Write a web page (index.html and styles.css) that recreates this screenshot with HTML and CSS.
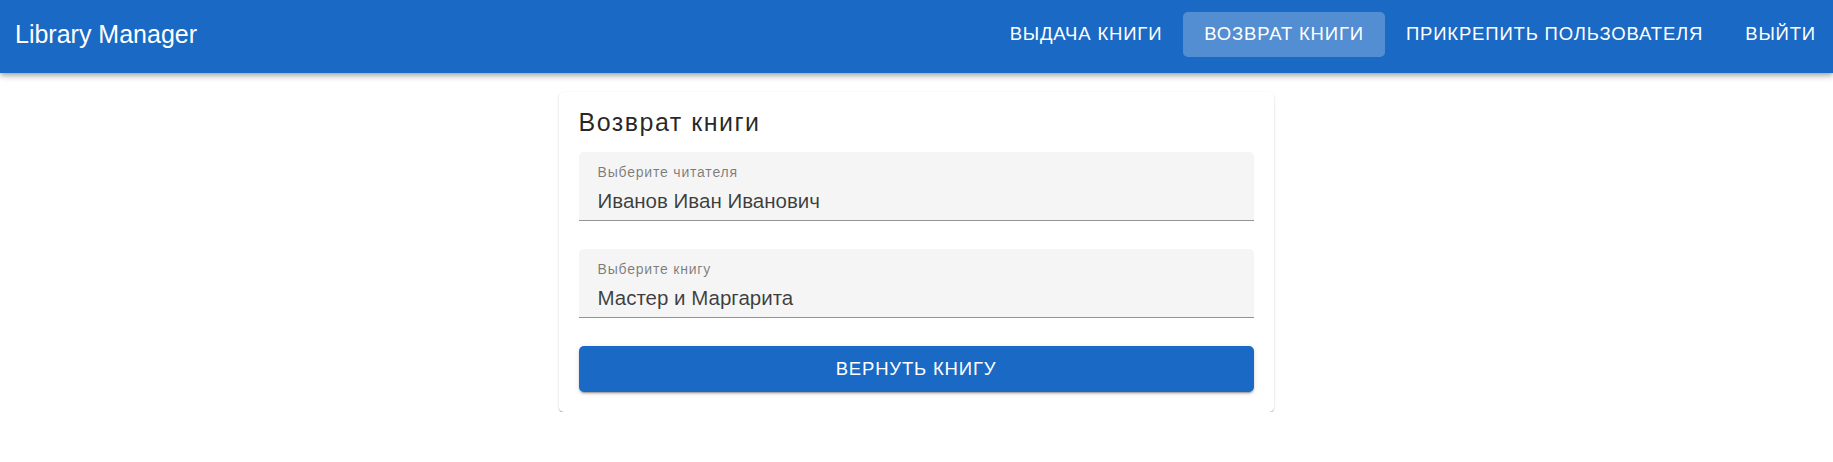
FILE: index.html
```html
<!DOCTYPE html>
<html lang="ru">
<head>
<meta charset="utf-8">
<title>Library Manager</title>
<link rel="stylesheet" href="styles.css">
</head>
<body>
<header class="appbar">
  <div class="brand">Library Manager</div>
  <nav class="nav">
    <a class="nav-btn">Выдача книги</a>
    <a class="nav-btn active">Возврат книги</a>
    <a class="nav-btn">Прикрепить пользователя</a>
    <a class="nav-btn">Выйти</a>
  </nav>
</header>
<main class="main">
  <section class="card">
    <h2 class="card-title">Возврат книги</h2>
    <div class="field">
      <div class="field-label">Выберите читателя</div>
      <div class="field-value">Иванов Иван Иванович</div>
    </div>
    <div class="field">
      <div class="field-label">Выберите книгу</div>
      <div class="field-value">Мастер и Маргарита</div>
    </div>
    <button class="submit">Вернуть книгу</button>
  </section>
</main>
</body>
</html>
```
FILE: styles.css
```css
* { box-sizing: border-box; }
html, body { margin: 0; padding: 0; background: #fff; }
body { font-family: "Liberation Sans", Arial, sans-serif; color: rgba(0,0,0,0.87); }

.appbar {
  height: 73px;
  padding: 0 0 5px 14px;
  background: #1a69c4;
  color: #fff;
  display: flex;
  align-items: center;
  justify-content: space-between;
  box-shadow: 0 2px 4px -1px rgba(0,0,0,.2), 0 4px 5px 0 rgba(0,0,0,.14), 0 1px 10px 0 rgba(0,0,0,.12);
  position: relative;
  z-index: 2;
}
.brand {
  font-size: 25px;
  font-weight: 400;
  line-height: 30px;
  padding-left: 1px;
}
.nav { display: flex; align-items: center; }
.nav-btn {
  height: 45px;
  padding: 0 21px;
  display: flex;
  align-items: center;
  font-size: 18.5px;
  font-weight: 400;
  letter-spacing: 0.83px;
  text-transform: uppercase;
  border-radius: 5px;
  color: #fff;
  cursor: pointer;
}
.nav-btn:last-child { padding-right: 17px; }
.nav-btn.active { background: rgba(255,255,255,0.25); }

.main { display: flex; justify-content: center; padding: 19px 1px 0 0; }
.card {
  width: 715px;
  background: #fff;
  border-radius: 5px;
  padding: 16px 20px 20px 20px;
  box-shadow: 0 2px 1px -1px rgba(0,0,0,.2), 0 1px 1px 0 rgba(0,0,0,.14), 0 1px 3px 0 rgba(0,0,0,.12);
  display: flex;
  flex-direction: column;
}
.card-title {
  margin: 0 0 16px 0;
  font-size: 25px;
  font-weight: 400;
  line-height: 28px;
  letter-spacing: 1.5px;
  color: rgba(0,0,0,0.85);
}
.field {
  background: #f5f5f5;
  border-radius: 5px 5px 0 0;
  border-bottom: 1px solid #949494;
  padding: 12px 19px 8px 19px;
  margin-bottom: 28px;
}
.field-label {
  font-size: 14px;
  line-height: 16px;
  letter-spacing: 0.8px;
  color: rgba(0,0,0,0.5);
}
.field-value {
  margin-top: 9px;
  font-size: 20.5px;
  line-height: 23px;
  color: rgba(0,0,0,0.75);
}
.submit {
  height: 46px;
  border: 0;
  border-radius: 5px;
  background: #1a69c4;
  color: #fff;
  font-family: "Liberation Sans", Arial, sans-serif;
  font-size: 18.5px;
  font-weight: 400;
  letter-spacing: 0.83px;
  text-transform: uppercase;
  box-shadow: 0 3px 1px -2px rgba(0,0,0,.2), 0 2px 2px 0 rgba(0,0,0,.14), 0 1px 5px 0 rgba(0,0,0,.12);
  cursor: pointer;
}
```
